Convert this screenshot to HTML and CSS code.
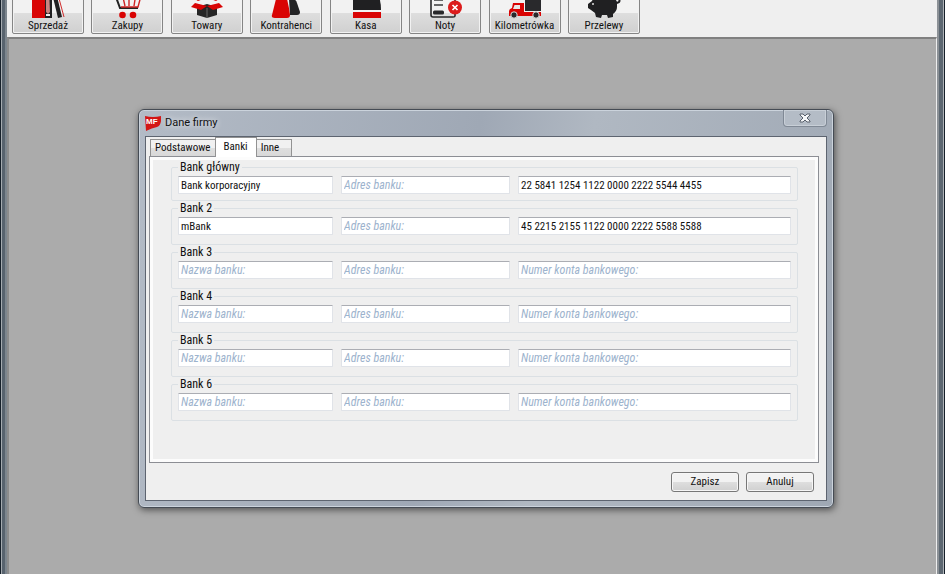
FILE: index.html
```html
<!DOCTYPE html>
<html lang="pl">
<head>
<meta charset="utf-8">
<title>Dane firmy</title>
<link rel="stylesheet" href="styles.css">
</head>
<body>
<div class="window">
  <nav class="toolbar">
    <div class="tools">
      <button class="tool" type="button">
        <svg viewBox="0 0 40 36" aria-hidden="true"><path fill="#d90404" d="M4 4h13v31H4z"/><path fill="#202022" d="M17 4h7v31h-7z"/><path fill="#c98580" d="M18 6h3l1 23-2 2-2-2z"/><path fill="#eee" d="M18 31h4v2h-4z"/><path fill="#202022" d="M23 6l4-1 7 29-4 1z"/><path stroke="#cf2b2b" d="M29 8l7 26"/></svg>
        <span>Sprzedaż</span></button>
      <button class="tool" type="button">
        <svg viewBox="0 0 40 36" aria-hidden="true"><g fill="none"><path stroke="#222" stroke-width="2" d="M2 6h4l7 19h18"/><path stroke="#cf2424" stroke-width="1.4" d="M8 9h27l-4 15H14M15 10l3 13M22 10v13M29 10l-2 13M9 15h24"/></g><circle cx="15.500" cy="32" r="3.300" fill="#d90404"/><circle cx="26" cy="32" r="3.300" fill="#d90404"/></svg>
        <span>Zakupy</span></button>
      <button class="tool" type="button">
        <svg viewBox="0 0 40 36" aria-hidden="true"><path fill="#262626" d="M10 24l10-3 10 3v8l-10 3-10-3z"/><path stroke="#666" d="M20 25v10"/><path fill="#d90404" d="M4 24l4-4 12 3-6 4zM36 24l-4-4-12 3 6 4zM5 14l4-3 10 4-8 3zM35 14l-4-3-10 4 8 3z"/></svg>
        <span>Towary</span></button>
      <button class="tool" type="button">
        <svg viewBox="0 0 40 36" aria-hidden="true"><path fill="#232325" d="M23 16q6-2 8 4l3 9q0 3-3 3h-7z"/><path fill="#d90404" d="M10 16q5-5 11 0 2 8 3 16 0 3-3 3H9q-4 0-3-3z"/></svg>
        <span>Kontrahenci</span></button>
      <button class="tool" type="button">
        <svg viewBox="0 0 40 36" aria-hidden="true"><path fill="#202022" d="M10 10h21q4 6 4 17H7V14z"/><path fill="#d90404" d="M7 29h28v6H7z"/></svg>
        <span>Kasa</span></button>
      <button class="tool" type="button">
        <svg viewBox="0 0 40 36" aria-hidden="true"><path fill="none" stroke="#28282a" stroke-width="1.600" d="M6 4h24v29q0 1-2 1H8q-2 0-2-2z"/><path stroke="#38383a" stroke-width="1.500" d="M9 17h9M9 22h9"/><rect x="8" y="27.500" width="11" height="4" rx="1.500" fill="#28282a"/><circle cx="30" cy="24.500" r="7" fill="#dc1c1c"/><path stroke="#fff" stroke-width="1.700" d="M27.500 22l5 5m0-5l-5 5"/></svg>
        <span>Noty</span></button>
      <button class="tool" type="button">
        <svg viewBox="0 0 40 36" aria-hidden="true"><path fill="#d90404" d="M8 20h11v9h17v4H4v-5q0-2 3-3z"/><path fill="#e8e8e8" d="M9.500 22H15v4H8z"/><path fill="#29292c" d="M20 12h15q1 0 1 2v14H20z"/><g fill="#29292c" stroke="#ddd"><circle cx="9" cy="32" r="3.200"/><circle cx="31" cy="32" r="3.200"/></g></svg>
        <span>Kilometrówka</span></button>
      <button class="tool" type="button">
        <svg viewBox="0 0 40 36" aria-hidden="true"><path fill="#202022" d="M4 21l4-3q2-5 8-6 14-1 17 7v5q0 4-4 7v3l-5 1-1-3h-5l-1 3-5-1-1-4-4-3-3-2z"/><path fill="none" stroke="#202022" stroke-width="2" d="M31 20q6 0 4-4"/><circle cx="9" cy="21" r="1" fill="#ddd"/></svg>
        <span>Przelewy</span></button>
    </div>
  </nav>
  <main class="workspace">
    <section class="dialog" aria-labelledby="dialog-title">
      <header class="titlebar">
        <svg class="logo" viewBox="0 0 16 16" aria-hidden="true"><path fill="#d31515" d="M0 1q8 2 16 0 1 9-4 11-5 1-11 4z"/><text x="1" y="9">MF</text></svg>
        <h1 id="dialog-title">Dane firmy</h1>
        <button class="close" type="button" aria-label="Zamknij"><svg viewBox="0 0 12 10" aria-hidden="true"><path d="M1 1h3l2 2 2-2h3v1L8 5l3 3v1H8L6 7 4 9H1V8l3-3-3-3z" fill="#f5f7f9" stroke="#59616c"/></svg></button>
      </header>
      <form class="client">
        <div class="tabs" role="tablist">
          <button class="tab" type="button" role="tab">Podstawowe</button>
          <button class="tab active" type="button" role="tab" aria-selected="true">Banki</button>
          <button class="tab last" type="button" role="tab">Inne</button>
        </div>
        <div class="panel" role="tabpanel">
          <fieldset class="first"><legend>Bank główny</legend>
            <input aria-label="Nazwa banku" placeholder="Nazwa banku:" value="Bank korporacyjny"><input aria-label="Adres banku" placeholder="Adres banku:"><input aria-label="Numer konta bankowego" placeholder="Numer konta bankowego:" value="22 5841 1254 1122 0000 2222 5544 4455"></fieldset>
          <fieldset><legend>Bank 2</legend>
            <input aria-label="Nazwa banku" placeholder="Nazwa banku:" value="mBank"><input aria-label="Adres banku" placeholder="Adres banku:"><input aria-label="Numer konta bankowego" placeholder="Numer konta bankowego:" value="45 2215 2155 1122 0000 2222 5588 5588"></fieldset>
          <fieldset><legend>Bank 3</legend>
            <input aria-label="Nazwa banku" placeholder="Nazwa banku:"><input aria-label="Adres banku" placeholder="Adres banku:"><input aria-label="Numer konta bankowego" placeholder="Numer konta bankowego:"></fieldset>
          <fieldset><legend>Bank 4</legend>
            <input aria-label="Nazwa banku" placeholder="Nazwa banku:"><input aria-label="Adres banku" placeholder="Adres banku:"><input aria-label="Numer konta bankowego" placeholder="Numer konta bankowego:"></fieldset>
          <fieldset><legend>Bank 5</legend>
            <input aria-label="Nazwa banku" placeholder="Nazwa banku:"><input aria-label="Adres banku" placeholder="Adres banku:"><input aria-label="Numer konta bankowego" placeholder="Numer konta bankowego:"></fieldset>
          <fieldset><legend>Bank 6</legend>
            <input aria-label="Nazwa banku" placeholder="Nazwa banku:"><input aria-label="Adres banku" placeholder="Adres banku:"><input aria-label="Numer konta bankowego" placeholder="Numer konta bankowego:"></fieldset>
        </div>
        <div class="actions">
          <button class="action" type="button">Zapisz</button>
          <button class="action" type="button">Anuluj</button>
        </div>
      </form>
    </section>
  </main>
</div>
</body>
</html>
```
FILE: styles.css
```css
* { box-sizing: border-box; }

body {
  margin: 0;
  background: #5b6670;
  color: #111;
  font: 11px/14px "Liberation Sans Narrow", "Roboto Condensed", "Liberation Sans", sans-serif;
}

button, input { font: inherit; color: inherit; margin: 0; }

.window {
  display: flex;
  flex-direction: column;
  min-height: 100vh;
  padding: 0 8px 0 7px;
  background: linear-gradient(90deg, #16202a 0 1px, #a5abb0 1px 2px, #58636e 2px 5px, #7d868e 5px 7px, transparent 7px calc(100% - 8px), #8c9196 calc(100% - 8px) calc(100% - 6px), #5d6872 calc(100% - 6px) calc(100% - 2px), #b0b4b8 calc(100% - 2px) calc(100% - 1px), #16202a calc(100% - 1px));
}

.toolbar {
  display: flex;
  align-items: flex-end;
  height: 37px;
  overflow: hidden;
  padding: 0 5px 3px;
  background: #efefef;
}

.tools {
  display: flex;
  justify-content: space-between;
  width: 628px;
}

.tool {
  display: flex;
  flex-direction: column;
  align-items: center;
  justify-content: flex-end;
  width: 72px;
  height: 64px;
  padding: 0;
  border: 1px solid #858585;
  border-radius: 2px;
  background: linear-gradient(#f2f2f2 0 68%, #dedede 68%, #d0d0d0);
  box-shadow: inset 0 0 0 1px #f2f2f2;
  white-space: nowrap;
}

.tool svg { width: 40px; height: 36px; fill: none; }

.workspace {
  display: flex;
  align-items: flex-start;
  flex: 1;
  padding: 70px 102px 60px 129px;
  border-top: 2px solid #808080;
  border-left: 2px solid #8c8c8c;
  border-right: 1px solid #eee;
  background: #ababab;
}

.dialog {
  flex: 1;
  padding: 0 6px 6px;
  border: 1px solid #454b54;
  border-radius: 6px;
  background: linear-gradient(100deg, #b3bbc6, #9fa8b5 45%, #b0b8c2 60%, #9fa8b4);
  box-shadow: inset 0 0 0 1px #cbd3dc, 1px 2px 7px #0008;
}

.titlebar {
  display: flex;
  align-items: center;
  height: 26px;
}

.logo { width: 16px; height: 16px; }
.logo text { fill: #fff; font: bold 8px "Liberation Sans", sans-serif; }

h1 {
  flex: 1;
  margin: 0 4px;
  font: 11px/16px Roboto, sans-serif;
  text-shadow: 0 0 6px #fff;
}

.close {
  display: grid;
  place-items: center;
  align-self: flex-start;
  width: 44px;
  height: 17px;
  padding: 0;
  border: 1px solid #808995;
  border-top: 0;
  border-radius: 0 0 4px 4px;
  background: #b4bcc6;
  box-shadow: inset 0 0 0 1px #c8cfd7;
}

.close svg { width: 12px; height: 10px; }

.client {
  padding: 0 7px 8px 3px;
  border: 1px solid #5d6470;
  background: #efefef;
}

.tabs {
  display: flex;
  align-items: flex-end;
  height: 19px;
  padding-left: 1px;
}

.tab {
  height: 17px;
  padding: 0 4px;
  border: 1px solid #929292;
  border-bottom: 0;
  background: linear-gradient(#f1f1f1 50%, #dfdfdf 50%, #d8d8d8);
}

.tab.active {
  height: 20px;
  margin: 0 -1px -1px;
  padding: 0 8px 2px;
  background: #fff;
  z-index: 1;
}

.tab.last { padding: 0 12px 0 4px; }

.panel {
  padding: 4px 20px 40px 21px;
  border: 1px solid #8c8e94;
  background: #efefef;
  box-shadow: inset 0 0 0 3px #fcfcfc;
}

fieldset {
  display: grid;
  grid-template-columns: 155fr 169fr 273fr;
  gap: 8px;
  min-width: 0;
  margin: 0 0 1px;
  padding: 2px 6px 9px;
  border: 1px solid #dbe0e4;
  border-radius: 2px;
}

fieldset.first { padding-bottom: 6px; }

legend { padding: 0 2px; font-size: 12px; line-height: 13px; }

fieldset input {
  width: 100%;
  min-width: 0;
  height: 18px;
  padding: 0 2px;
  border: 1px solid #e0e3e8;
  border-top-color: #abadb3;
  border-radius: 1px;
  background: #fff;
}

::placeholder { color: #9db3cd; opacity: 1; font-size: 12px; font-style: italic; }

.actions {
  display: flex;
  justify-content: flex-end;
  gap: 7px;
  padding: 9px 5px 0 0;
}

.action {
  width: 68px;
  height: 20px;
  padding: 0;
  border: 1px solid #777;
  border-radius: 3px;
  background: linear-gradient(#f2f2f2 50%, #dedede 50%, #d0d0d0);
  box-shadow: inset 0 0 0 1px #f6f6f6;
}
```
